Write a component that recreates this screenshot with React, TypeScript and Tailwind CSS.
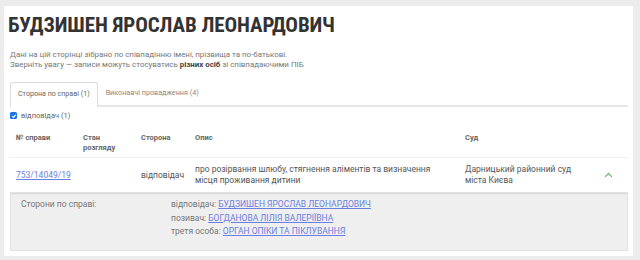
import React from "react";

const font = { fontFamily: "Roboto, 'Noto Sans', sans-serif" };

export default function App() {
  return (
    <div
      className="w-[640px] h-[260px] overflow-hidden bg-[#ececec] pt-[6px] pl-[4px]"
      style={font}
    >
      <div className="w-[629px] h-[250px] bg-white pl-[6px] pr-[5px] pt-[6px]">
        <h1 className="text-[21px] leading-[26px] font-bold text-[#333] -ml-[2px] tracking-[-0.1px] [font-stretch:75%]">
          БУДЗИШЕН ЯРОСЛАВ ЛЕОНАРДОВИЧ
        </h1>
        <div className="mt-[12px] text-[7.9px] leading-[9.5px] text-[#777]">
          <p>Дані на цій сторінці зібрано по співпадінню імені, прізвища та по-батькові.</p>
          <p>
            Зверніть увагу — записи можуть стосуватись{" "}
            <b className="text-[#444] font-bold">різних осіб</b> зі співпадаючими ПІБ
          </p>
        </div>

        {/* tabs */}
        <div className="mt-[13px] flex border-b-[2px] border-[#e6e6e6]">
          <div className="h-[22px] px-[7px] flex items-center border border-b-0 border-[#dcdcdc] rounded-t-[3px] text-[7.1px] text-[#666] bg-white -mb-[2px] pb-[2px] box-content">
            Сторона по справі (1)
          </div>
          <div className="h-[22px] px-[8px] flex items-center text-[7.2px] text-[#888]">
            Виконавчі провадження (4)
          </div>
        </div>

        {/* filter */}
        <div className="mt-[3px] flex items-center gap-[4px] text-[7.5px] text-[#666]">
          <span className="w-[7px] h-[7px] rounded-[1.5px] bg-[#1a73e8] flex items-center justify-center">
            <svg viewBox="0 0 10 10" className="w-[6px] h-[6px]">
              <path d="M2 5.2 L4.2 7.3 L8.2 2.6" stroke="white" strokeWidth="1.8" fill="none" />
            </svg>
          </span>
          <span>відповідач (1)</span>
        </div>

        {/* table header */}
        <div className="mt-[12px] grid grid-cols-[67px_58px_54px_270px_150px_1fr] border-b border-[#f0f0f0] pb-[5px] text-[7.5px] leading-[9.5px] font-bold text-[#666]">
          <div className="px-[6px]">№ справи</div>
          <div className="px-[6px]">
            Стан
            <br />
            розгляду
          </div>
          <div className="px-[6px]">Сторона</div>
          <div className="px-[6px]">Опис</div>
          <div className="px-[6px]">Суд</div>
          <div />
        </div>

        {/* data row */}
        <div className="grid grid-cols-[67px_58px_54px_270px_130px_1fr] items-center h-[34px] text-[8.5px] leading-[11.5px] text-[#555]">
          <div className="px-[6px]">
            <a className="text-[#6a7fe0] underline">753/14049/19</a>
          </div>
          <div />
          <div className="px-[6px]">відповідач</div>
          <div className="px-[6px]">
            про розірвання шлюбу, стягнення аліментів та визначення місця проживання дитини
          </div>
          <div className="px-[6px]">Дарницький районний суд міста Києва</div>
          <div className="flex justify-center">
            <svg viewBox="0 0 12 8" className="w-[9px] h-[6px]">
              <path d="M1.5 6.5 L6 2 L10.5 6.5" stroke="#6abf6a" strokeWidth="1.8" fill="none" />
            </svg>
          </div>
        </div>

        {/* expanded panel */}
        <div className="h-[59px] bg-[#efefef] border border-[#e2e2e2] shadow-[inset_0_2px_1px_-1px_#d6d6d6] flex pt-[5px] text-[8.5px] leading-[13.5px] text-[#777]">
          <div className="w-[160px] pl-[10px]">Сторони по справі:</div>
          <div>
            <div>
              відповідач: <a className="text-[#6a7fe0] underline">БУДЗИШЕН ЯРОСЛАВ ЛЕОНАРДОВИЧ</a>
            </div>
            <div>
              позивач: <a className="text-[#6a7fe0] underline">БОГДАНОВА ЛІЛІЯ ВАЛЕРІЇВНА</a>
            </div>
            <div>
              третя особа: <a className="text-[#6a7fe0] underline">ОРГАН ОПІКИ ТА ПІКЛУВАННЯ</a>
            </div>
          </div>
        </div>
      </div>
    </div>
  );
}
